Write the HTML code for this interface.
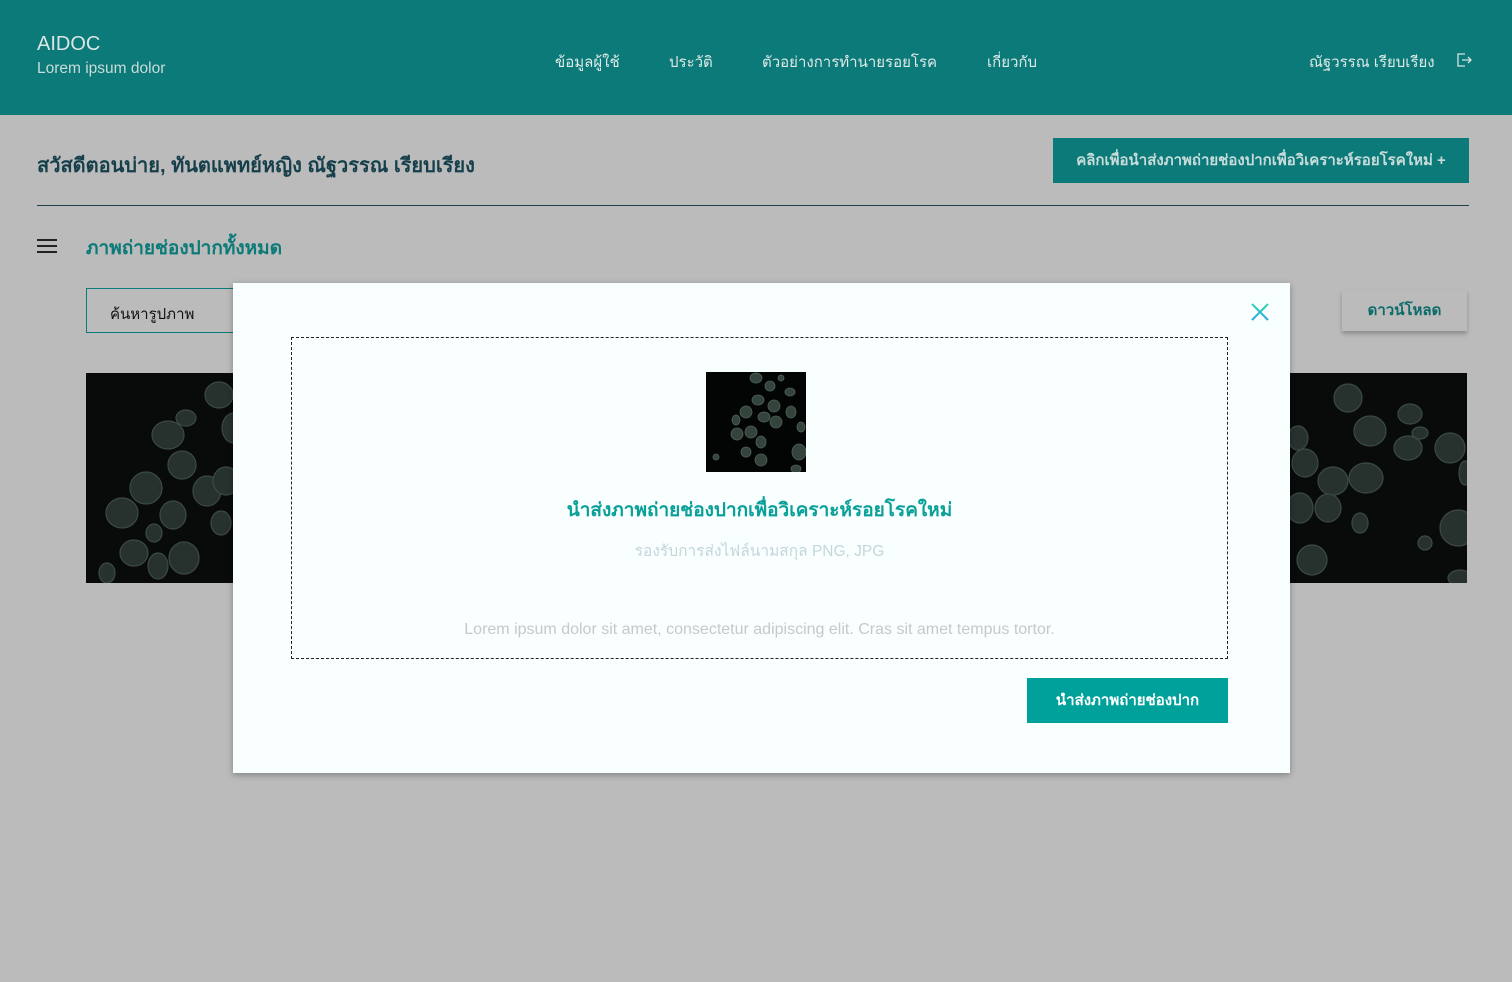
<!DOCTYPE html>
<html><head><meta charset="utf-8">
<style>
*{margin:0;padding:0;box-sizing:border-box}
body{width:1512px;height:982px;overflow:hidden;background:#bbbbbb;font-family:"Liberation Sans",sans-serif;position:relative}
.hdr{position:absolute;left:0;top:0;width:1512px;height:115px;background:#0b7a78;color:#d6e4e3}
.logo{position:absolute;left:37px;top:33px;font-size:20px;color:#d9e6e5}
.sub{position:absolute;left:37px;top:60px;font-size:15.5px;color:#c9dbda}
.nav{position:absolute;top:50px;font-size:15px;color:#dfeae9}
.greet{position:absolute;left:37px;top:149px;font-size:20px;color:#163f4c;font-weight:bold}
.newbtn{position:absolute;left:1053px;top:138px;width:416px;height:45px;background:#0b7a78;color:#c8dcdb;font-size:15px;font-weight:bold;text-align:center;line-height:45px}
.line{position:absolute;left:37px;top:205px;width:1432px;height:1px;background:#1f3e4a}
.ham{position:absolute;left:37px;top:239px;width:20px}
.ham i{display:block;height:2px;background:#222;margin-bottom:4px}
.title{position:absolute;left:86px;top:233px;font-size:19px;color:#0b7a78;font-weight:bold}
.search{position:absolute;left:86px;top:288px;width:160px;height:45px;border:1.5px solid #0b7a78;font-size:15px;color:#111;padding:13px 0 0 23px}
.dl{position:absolute;left:1342px;top:290px;width:125px;height:41px;background:#bbbbbb;box-shadow:0 3px 4px rgba(0,0,0,.25);color:#0b6b69;font-weight:bold;font-size:15px;text-align:center;line-height:41px}
.img{position:absolute;background:#090b0a;overflow:hidden}
.img svg g{fill:#27312d;stroke:#3c4a44;stroke-width:1.2}
.modal{position:absolute;left:233px;top:283px;width:1057px;height:490px;background:#f9fefe;box-shadow:0 2px 6px rgba(0,0,0,.3)}
.drop{position:absolute;left:58px;top:54px;width:937px;height:322px;border:1px dashed #222}
.mt{position:absolute;left:0;width:100%;text-align:center}
.sbtn{position:absolute;left:794px;top:395px;width:201px;height:45px;background:#00a19b;color:#fff;font-weight:bold;font-size:15px;text-align:center;line-height:45px}
</style></head><body>
<div class="hdr">
<div class="logo">AIDOC</div><div class="sub">Lorem ipsum dolor</div>
<div class="nav" style="left:555px">ข้อมูลผู้ใช้</div>
<div class="nav" style="left:669px">ประวัติ</div>
<div class="nav" style="left:762px">ตัวอย่างการทำนายรอยโรค</div>
<div class="nav" style="left:987px">เกี่ยวกับ</div>
<div class="nav" style="left:1309px">ณัฐวรรณ เรียบเรียง</div>
<svg style="position:absolute;left:1456px;top:52px" width="16" height="16" viewBox="0 0 16 16" fill="none" stroke="#d6e4e3" stroke-width="1.3"><path d="M9 2H2v12h7M6 8h9M12 5l3 3-3 3"/></svg>
</div>
<div class="greet">สวัสดีตอนบ่าย, ทันตแพทย์หญิง ณัฐวรรณ เรียบเรียง</div>
<div class="newbtn">คลิกเพื่อนำส่งภาพถ่ายช่องปากเพื่อวิเคราะห์รอยโรคใหม่ +</div>
<div class="line"></div>
<div class="ham"><i></i><i></i><i></i></div>
<div class="title">ภาพถ่ายช่องปากทั้งหมด</div>
<div class="search">ค้นหารูปภาพ</div>
<div class="dl">ดาวน์โหลด</div>
<div class="img" style="left:86px;top:373px;width:147px;height:210px"><svg width="147" height="210"><g>
<ellipse cx="133" cy="22" rx="14" ry="13"/><ellipse cx="148" cy="55" rx="12" ry="15"/>
<ellipse cx="82" cy="62" rx="16" ry="14"/><ellipse cx="96" cy="92" rx="14" ry="14"/>
<ellipse cx="60" cy="115" rx="16" ry="16"/><ellipse cx="121" cy="118" rx="14" ry="15"/>
<ellipse cx="140" cy="108" rx="13" ry="14"/><ellipse cx="36" cy="140" rx="16" ry="15"/>
<ellipse cx="87" cy="142" rx="13" ry="14"/><ellipse cx="135" cy="150" rx="10" ry="12"/>
<ellipse cx="48" cy="180" rx="14" ry="13"/><ellipse cx="98" cy="185" rx="15" ry="16"/>
<ellipse cx="72" cy="193" rx="10" ry="13"/><ellipse cx="21" cy="200" rx="8" ry="10"/>
<ellipse cx="100" cy="45" rx="10" ry="8"/><ellipse cx="68" cy="160" rx="8" ry="9"/>
</g></svg></div>
<div class="img" style="left:1290px;top:373px;width:177px;height:210px"><svg width="177" height="210"><g>
<ellipse cx="58" cy="25" rx="14" ry="14"/><ellipse cx="80" cy="58" rx="16" ry="15"/>
<ellipse cx="120" cy="41" rx="12" ry="10"/><ellipse cx="118" cy="75" rx="14" ry="12"/>
<ellipse cx="130" cy="60" rx="8" ry="6"/><ellipse cx="160" cy="75" rx="15" ry="15"/>
<ellipse cx="8" cy="65" rx="10" ry="12"/><ellipse cx="15" cy="90" rx="13" ry="14"/>
<ellipse cx="43" cy="108" rx="15" ry="14"/><ellipse cx="76" cy="105" rx="17" ry="15"/>
<ellipse cx="10" cy="135" rx="13" ry="15"/><ellipse cx="38" cy="135" rx="13" ry="14"/>
<ellipse cx="70" cy="150" rx="8" ry="10"/><ellipse cx="168" cy="155" rx="18" ry="18"/>
<ellipse cx="22" cy="187" rx="15" ry="15"/><ellipse cx="135" cy="170" rx="7" ry="7"/>
<ellipse cx="175" cy="100" rx="6" ry="12"/><ellipse cx="170" cy="205" rx="12" ry="8"/>
</g></svg></div>
<div class="modal">
<svg style="position:absolute;left:1017px;top:19px" width="20" height="20"><defs><linearGradient id="g" x1="0" y1="0" x2="0" y2="1"><stop offset="0" stop-color="#2fd9a8"/><stop offset="1" stop-color="#2aa6f0"/></linearGradient></defs><path d="M2 2L18 18M18 2L2 18" stroke="url(#g)" stroke-width="2"/></svg>
<div class="drop">
<div style="position:absolute;left:414px;top:34px;width:100px;height:100px;background:#030504;overflow:hidden"><svg width="100" height="100"><g fill="#34443d" stroke="#4f6259" stroke-width="0.8">
<ellipse cx="50" cy="6" rx="6" ry="5"/><ellipse cx="64" cy="14" rx="5" ry="5"/>
<ellipse cx="52" cy="28" rx="6" ry="5"/><ellipse cx="68" cy="34" rx="6" ry="6"/>
<ellipse cx="85" cy="40" rx="5" ry="6"/><ellipse cx="40" cy="40" rx="6" ry="6"/>
<ellipse cx="58" cy="45" rx="6" ry="5"/><ellipse cx="70" cy="50" rx="6" ry="6"/>
<ellipse cx="31" cy="62" rx="6" ry="6"/><ellipse cx="45" cy="60" rx="6" ry="6"/>
<ellipse cx="55" cy="70" rx="5" ry="6"/><ellipse cx="40" cy="80" rx="5" ry="5"/>
<ellipse cx="55" cy="88" rx="6" ry="6"/><ellipse cx="93" cy="80" rx="7" ry="8"/>
<ellipse cx="30" cy="48" rx="4" ry="5"/><ellipse cx="84" cy="20" rx="5" ry="4"/>
<ellipse cx="95" cy="55" rx="4" ry="5"/><ellipse cx="90" cy="97" rx="5" ry="4"/>
<ellipse cx="10" cy="85" rx="3" ry="3"/><ellipse cx="75" cy="6" rx="3" ry="3"/>
</g></svg></div>
<div class="mt" style="top:157px;font-size:19px;font-weight:bold;color:#0aa09a">นำส่งภาพถ่ายช่องปากเพื่อวิเคราะห์รอยโรคใหม่</div>
<div class="mt" style="top:200px;font-size:15.5px;color:#c3d6dc">รองรับการส่งไฟล์นามสกุล PNG, JPG</div>
<div class="mt" style="top:283px;font-size:16px;color:#c5c9cb">Lorem ipsum dolor sit amet, consectetur adipiscing elit. Cras sit amet tempus tortor.</div>
</div>
<div class="sbtn">นำส่งภาพถ่ายช่องปาก</div>
</div>
</body></html>
